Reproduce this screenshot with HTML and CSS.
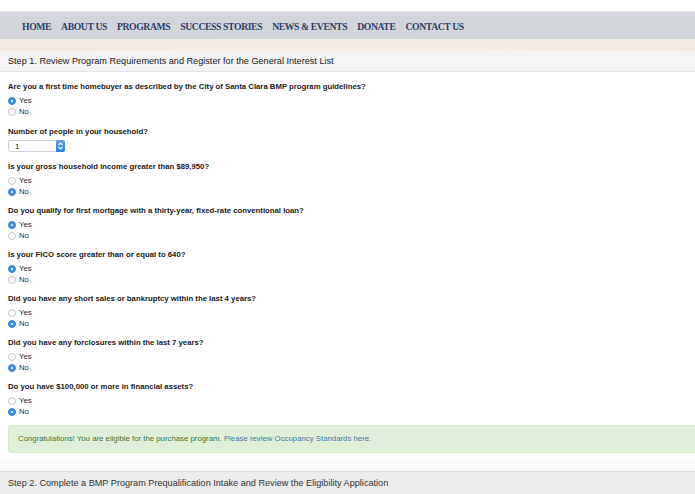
FILE: index.html
```html
<!DOCTYPE html>
<html>
<head>
<meta charset="utf-8">
<link rel="stylesheet" href="styles.css">
</head>
<body>
<div class="topgap"></div>
<nav class="nav">
  <a>HOME</a><a>ABOUT US</a><a>PROGRAMS</a><a>SUCCESS STORIES</a><a>NEWS &amp; EVENTS</a><a>DONATE</a><a>CONTACT US</a>
</nav>
<div class="cream"></div>
<section class="panel">
  <div class="panel-heading">Step 1. Review Program Requirements and Register for the General Interest List</div>
  <div class="panel-body">
    <div class="group first">
      <div class="q">Are you a first time homebuyer as described by the City of Santa Clara BMP program guidelines?</div>
      <label class="opt"><span class="radio on"></span>Yes</label>
      <label class="opt"><span class="radio"></span>No</label>
    </div>
    <div class="group sel-group">
      <div class="q">Number of people in your household?</div>
      <div class="select"><span class="val">1</span><span class="stepper"><svg width="7" height="10" viewBox="0 0 7 10"><path d="M1.5 4 L3.5 2 L5.5 4 M1.5 6 L3.5 8 L5.5 6" fill="none" stroke="#fff" stroke-width="1.1"/></svg></span></div>
    </div>
    <div class="group">
      <div class="q">Is your gross household income greater than $89,950?</div>
      <label class="opt"><span class="radio"></span>Yes</label>
      <label class="opt"><span class="radio on"></span>No</label>
    </div>
    <div class="group">
      <div class="q">Do you qualify for first mortgage with a thirty-year, fixed-rate conventional loan?</div>
      <label class="opt"><span class="radio on"></span>Yes</label>
      <label class="opt"><span class="radio"></span>No</label>
    </div>
    <div class="group">
      <div class="q">Is your FICO score greater than or equal to 640?</div>
      <label class="opt"><span class="radio on"></span>Yes</label>
      <label class="opt"><span class="radio"></span>No</label>
    </div>
    <div class="group">
      <div class="q">Did you have any short sales or bankruptcy within the last 4 years?</div>
      <label class="opt"><span class="radio"></span>Yes</label>
      <label class="opt"><span class="radio on"></span>No</label>
    </div>
    <div class="group">
      <div class="q">Did you have any forclosures within the last 7 years?</div>
      <label class="opt"><span class="radio"></span>Yes</label>
      <label class="opt"><span class="radio on"></span>No</label>
    </div>
    <div class="group">
      <div class="q">Do you have $100,000 or more in financial assets?</div>
      <label class="opt"><span class="radio"></span>Yes</label>
      <label class="opt"><span class="radio on"></span>No</label>
    </div>
    <div class="alert">Congratulations! You are eligible for the purchase program. <a>Please review Occupancy Standards here.</a></div>
  </div>
  <div class="panel-foot"></div>
</section>
<section class="panel2">
  <div class="panel2-heading">Step 2. Complete a BMP Program Prequalification Intake and Review the Eligibility Application</div>
</section>
</body>
</html>
```
FILE: styles.css
```css
html, body { margin: 0; padding: 0; background: #fff; }
body { font-family: "Liberation Sans", Arial, sans-serif; color: #222; overflow: hidden; width: 695px; height: 494px; }

.topgap { height: 11px; background: #fff; }
.nav {
  height: 28px;
  background: #d2d5da;
  border-top: 1px solid #e2e4e7;
  display: flex;
  align-items: center;
  padding-left: 22px;
  gap: 10px;
  box-sizing: border-box;
}
.nav a {
  font-family: "Liberation Serif", "Times New Roman", serif;
  font-weight: bold;
  font-size: 9.7px;
  letter-spacing: -0.4px;
  color: #2d3e68;
  padding-top: 2px;
}
.cream {
  height: 12px;
  background: linear-gradient(to right, #f3ebdf, #f4eee5 40%, #f3ece1);
}

.panel-heading {
  height: 21px;
  box-sizing: border-box;
  background: #f4f4f5;
  border-bottom: 1px solid #e3e3e3;
  font-size: 9.15px;
  line-height: 21px;
  padding-left: 8px;
  color: #222;
}
.panel-body { padding: 9px 0 0 8px; }

.group { margin-bottom: 8px; }
.group.first { margin-bottom: 9px; }
.sel-group { margin-bottom: 9px; }
.q { font-weight: bold; font-size: 7.75px; line-height: 11px; height: 11px; margin-bottom: 3px; color: #1a1a1a; white-space: nowrap; }
.opt { display: flex; align-items: center; height: 11px; font-size: 7.75px; color: #2a2a2a; }
.radio {
  width: 6px; height: 6px; border-radius: 50%;
  border: 0.5px solid #c6c6c6;
  background: #fafafa;
  margin-right: 3px;
  box-sizing: content-box;
  position: relative;
}
.radio.on {
  background: #3d8fe6;
  border-color: #3583d8;
}
.radio.on::after {
  content: "";
  position: absolute;
  left: 2px; top: 2px;
  width: 2px; height: 2px;
  border-radius: 50%;
  background: #fff;
}

.select {
  width: 57px; height: 12px;
  box-sizing: border-box;
  border: 1px solid #cfd2d6;
  border-radius: 2px;
  background: #fff;
  display: flex;
  align-items: center;
  justify-content: space-between;
}
.select .val { font-size: 7.75px; padding-left: 6px; color: #222; }
.stepper {
  width: 9px; height: 12px;
  margin: -1px -1px -1px 0;
  background: linear-gradient(#5aa4f0, #2f7fe0);
  border-radius: 0 2px 2px 0;
  display: flex; align-items: center; justify-content: center;
}

.alert {
  margin-top: 8px;
  margin-right: -20px;
  height: 28px;
  background: #dff0d8;
  border: 1px solid #d6e9c6;
  border-radius: 3px 0 0 3px;
  box-sizing: border-box;
  font-size: 7.8px;
  line-height: 26px;
  padding-left: 9px;
  color: #3c763d;
}
.alert a { color: #3f78ad; }

.panel-foot {
  height: 17px;
  margin-top: 1px;
  background: linear-gradient(#ffffff, #f6f6f6);
}
.panel2-heading {
  height: 30px;
  background: #ebebeb;
  border-top: 1px solid #dcdcdc;
  font-size: 9.15px;
  line-height: 23px;
  padding-left: 8px;
  color: #333;
  white-space: nowrap;
}
```
